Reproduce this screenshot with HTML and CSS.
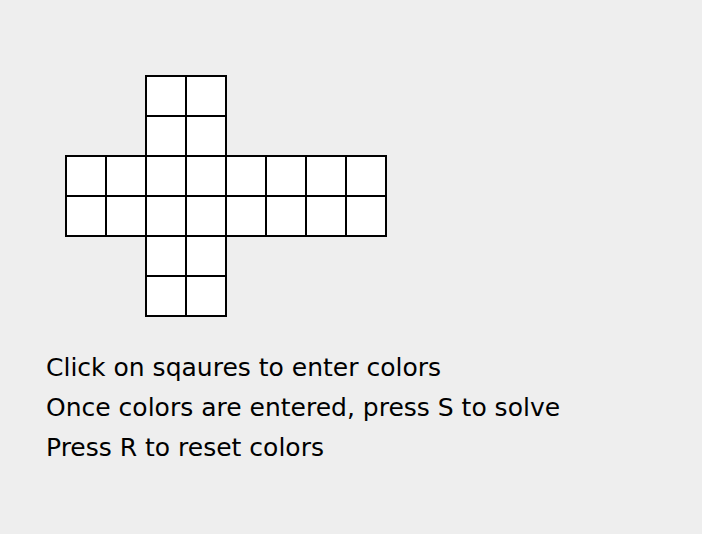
FILE: index.html
```html
<!DOCTYPE html>
<html>
<head>
<meta charset="utf-8">
<link rel="stylesheet" href="styles.css">
</head>
<body>
<div class="page">
  <div class="net">
    <div class="block block-top">
      <div class="cell"></div><div class="cell"></div>
      <div class="cell"></div><div class="cell"></div>
    </div>
    <div class="block block-mid">
      <div class="cell"></div><div class="cell"></div><div class="cell"></div><div class="cell"></div>
      <div class="cell"></div><div class="cell"></div><div class="cell"></div><div class="cell"></div>
      <div class="cell"></div><div class="cell"></div><div class="cell"></div><div class="cell"></div>
      <div class="cell"></div><div class="cell"></div><div class="cell"></div><div class="cell"></div>
    </div>
    <div class="block block-bot">
      <div class="cell"></div><div class="cell"></div>
      <div class="cell"></div><div class="cell"></div>
    </div>
  </div>
  <div class="help">
    <div class="line">Click on sqaures to enter colors</div>
    <div class="line">Once colors are entered, press S to solve</div>
    <div class="line">Press R to reset colors</div>
  </div>
</div>
</body>
</html>
```

FILE: styles.css
```css
html, body {
  margin: 0;
  padding: 0;
  background: #eeeeee;
}
.page {
  width: 702px;
  height: 534px;
  box-sizing: border-box;
  padding: 75px 0 0 65px;
  display: flex;
  flex-direction: column;
}
.net {
  display: flex;
  flex-direction: column;
  align-items: flex-start;
}
.block {
  display: grid;
  gap: 2px;
  background: #000;
  grid-auto-rows: 38px;
}
.block-top {
  grid-template-columns: repeat(2, 38px);
  padding: 2px 2px 0 2px;
  margin-left: 80px;
}
.block-mid {
  grid-template-columns: repeat(8, 38px);
  padding: 2px;
}
.block-bot {
  grid-template-columns: repeat(2, 38px);
  padding: 0 2px 2px 2px;
  margin-left: 80px;
}
.cell {
  background: #fff;
}
.help {
  margin-top: 31px;
  margin-left: -19px;
  font-family: "DejaVu Sans", sans-serif;
  font-size: 25px;
  line-height: 40px;
  color: #000;
}
.line {
  white-space: nowrap;
}
```
